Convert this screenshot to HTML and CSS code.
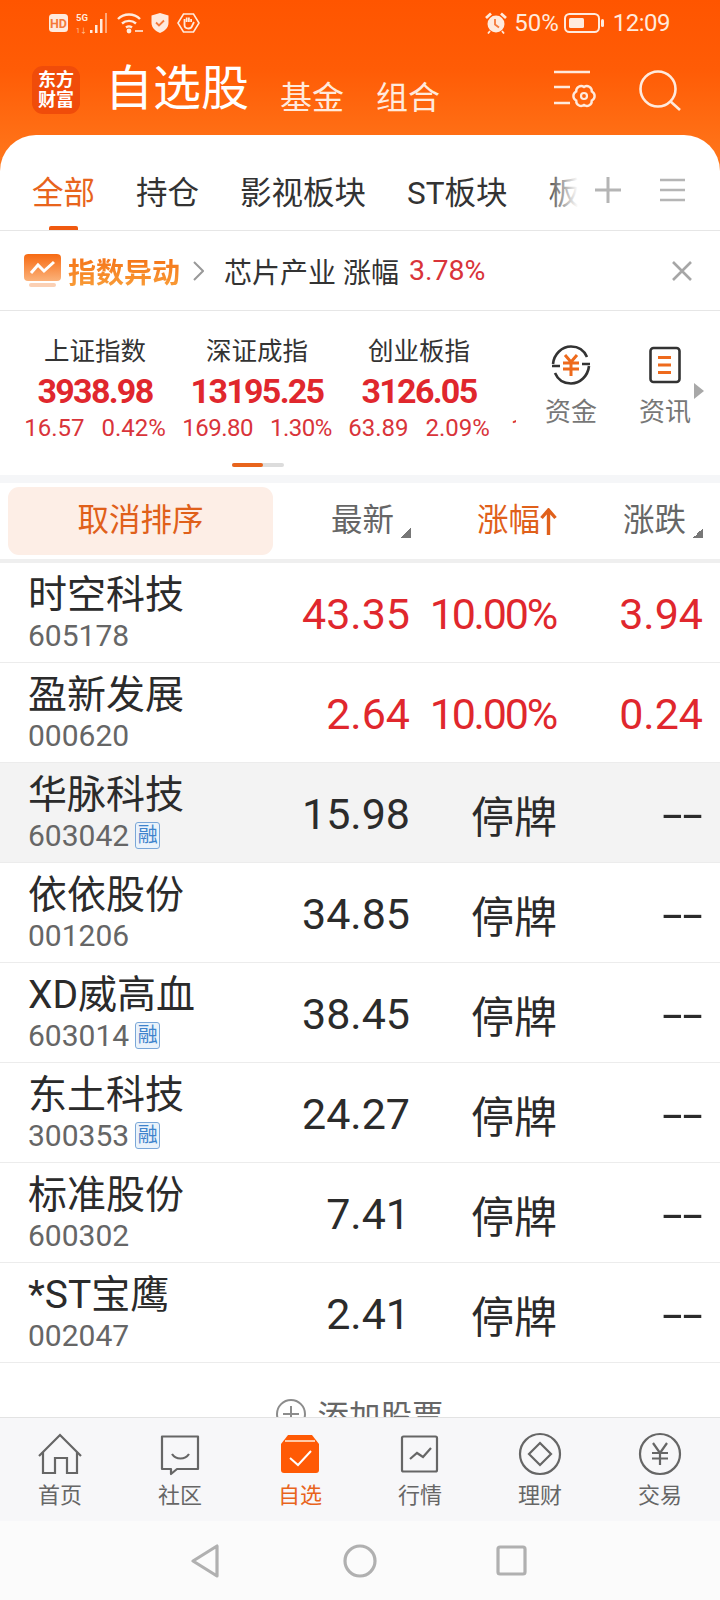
FILE: index.html
```html
<!DOCTYPE html>
<html lang="zh-CN">
<head>
    <meta charset="UTF-8">
    <meta name="viewport" content="width=device-width, initial-scale=1.0">
    <title>自选股</title>
    <link rel="stylesheet" href="styles.css">
</head>
<body>
<div class="screen">
    <div class="statusbar">
        <div class="status-left">
            <svg width="19" height="18" viewBox="0 0 19 18"><rect width="19" height="18" rx="3.500" fill="#ffeadd"/><text x="9.500" y="14" text-anchor="middle" class="hd-text">HD</text></svg>
            <svg width="33" height="22" viewBox="0 0 33 22"><text x="0" y="9" class="sig-text">5G</text><text x="0" y="21" class="sig-small">1↓</text><g fill="#ffeadd"><rect x="14" y="18" width="2.500" height="3"/><rect x="19" y="13" width="2.500" height="8"/><rect x="24" y="7" width="2.500" height="14"/><rect x="29" y="1" width="2" height="20" opacity=".55"/></g></svg>
            <svg width="26" height="22" viewBox="0 0 26 22" fill="none" stroke="#ffeadd" stroke-width="2.400"><path d="M1 7C7 1 17 1 23 7"/><path d="M5 11.500C9 8 15 8 19 11.500"/><path d="M9 15.500C11 14 13 14 15 15.500"/><circle cx="12" cy="19" r="1.200" fill="#ffeadd"/><path d="M18 19H26" stroke-width="1.600"/></svg>
            <svg width="18" height="20" viewBox="0 0 18 20"><path d="M9 0L17.500 2.500V10C17.500 15 13 18.500 9 20C5 18.500 .5 15 .5 10V2.500Z" fill="#ffeadd"/><path d="M5 9.500L8 12.500L13 7.500" fill="none" stroke="#f5793a" stroke-width="1.800"/></svg>
            <svg width="23" height="20" viewBox="0 0 23 20" fill="none" stroke="#ffeadd" stroke-width="1.600"><path d="M6.500 1H16.500L22 10L16.500 19H6.500L1 10Z"/><path d="M7.500 9V6M9.700 9V4.500M11.900 9V4.500M14.100 9V6M7.500 8V12C7.500 14.500 9.500 15.500 11.500 15.500C14 15.500 15 14 15.500 12L17 9" stroke-width="1.800"/></svg>
        </div>
        <div class="status-right">
            <svg width="22" height="22" viewBox="0 0 22 22"><circle cx="11" cy="12" r="8.500" fill="#ffeadd"/><path d="M10 7V12.500L14 15.500" fill="none" stroke="#f5793a" stroke-width="1.800"/><path d="M1 6L6 1.500M21 6L16 1.500" stroke="#ffeadd" stroke-width="2.800"/><path d="M5 19L3 21.500M17 19L19 21.500" stroke="#ffeadd" stroke-width="1.800"/></svg>
            <span class="status-pct">50%</span>
            <svg class="battery" width="40" height="20" viewBox="0 0 40 20"><rect x="1" y="1" width="34" height="18" rx="4.500" fill="none" stroke="#ffeadd" stroke-width="2"/><rect x="5" y="5" width="15" height="10" rx="1.500" fill="#ffeadd"/><rect x="37" y="6" width="3" height="8" rx="1.500" fill="#ffeadd"/></svg>
            <span class="status-time">12:09</span>
        </div>
    </div>

    <div class="topbar">
        <div class="logo"><span>东方</span><span>财富</span></div>
        <div class="title">自选股</div>
        <div class="subtab">基金</div>
        <div class="subtab">组合</div>
        <div class="top-icons">
            <svg width="44" height="40" viewBox="0 0 44 40" fill="none" stroke="#ffeadd" stroke-width="2.400"><path d="M0 2H36M0 17H16M0 33H16"/><path d="M37.800 21.500A5 5 0 0 1 37.800 30.500A5 5 0 0 1 30 35A5 5 0 0 1 22.200 30.500A5 5 0 0 1 22.200 21.500A5 5 0 0 1 30 17A5 5 0 0 1 37.800 21.500Z"/><circle cx="30" cy="26" r="3" stroke-width="2.200"/></svg>
            <svg width="42" height="42" viewBox="0 0 42 42" fill="none" stroke="#ffeadd" stroke-width="2.600"><circle cx="19" cy="19" r="17.500"/><path d="M31 31L41 40"/></svg>
        </div>
    </div>

    <div class="card">
        <div class="tabs">
            <div class="tab-scroll">
                <div class="tab active">全部</div>
                <div class="tab">持仓</div>
                <div class="tab">影视板块</div>
                <div class="tab">ST板块</div>
                <div class="tab">板块</div>
                <div class="tab-fade"></div>
            </div>
            <svg class="tab-plus" width="26" height="26" viewBox="0 0 26 26" stroke="#b5b5b5" stroke-width="3"><path d="M0 13H26M13 0V26"/></svg>
            <svg class="tab-menu" width="25" height="24" viewBox="0 0 25 24" stroke="#b5b5b5" stroke-width="2.500"><path d="M0 2H25M0 12H25M0 22H25"/></svg>
        </div>

        <div class="notice">
            <svg width="37" height="33" viewBox="0 0 37 33"><defs><linearGradient id="ng" x1="0" y1="0" x2="0" y2="1"><stop offset="0" stop-color="#f76a12"/><stop offset="1" stop-color="#fbb27a"/></linearGradient></defs><rect width="37" height="27" rx="4" fill="url(#ng)"/><rect x="5" y="29" width="27" height="4" rx="2" fill="#fbd0b4"/><path d="M7 19L14 11L20 17L30 8" fill="none" stroke="#fff" stroke-width="3"/></svg>
            <span class="notice-label">指数异动</span>
            <svg class="notice-arrow" width="11" height="20" viewBox="0 0 11 20" fill="none" stroke="#999" stroke-width="2"><path d="M1 1L10 10L1 19"/></svg>
            <span class="notice-text">芯片产业 涨幅</span>
            <span class="notice-num">3.78%</span>
            <svg class="notice-close" width="20" height="20" viewBox="0 0 20 20" stroke="#a6a6a6" stroke-width="2.600"><path d="M1 1L19 19M19 1L1 19"/></svg>
        </div>

        <div class="indexes">
            <div class="index-row">
                <div class="index-scroll">
                    <div class="index-item">
                        <div class="index-name">上证指数</div>
                        <div class="index-value">3938.98</div>
                        <div class="index-sub"><span>16.57</span><span>0.42%</span></div>
                    </div>
                    <div class="index-item">
                        <div class="index-name">深证成指</div>
                        <div class="index-value">13195.25</div>
                        <div class="index-sub tight"><span>169.80</span><span>1.30%</span></div>
                    </div>
                    <div class="index-item">
                        <div class="index-name">创业板指</div>
                        <div class="index-value">3126.05</div>
                        <div class="index-sub"><span>63.89</span><span>2.09%</span></div>
                    </div>
                    <div class="index-item clipped">
                        <div class="index-sub"><span>1</span></div>
                    </div>
                </div>
                <div class="shortcut first">
                    <svg width="40" height="40" viewBox="0 0 40 40" fill="none" stroke="#333" stroke-width="2.600"><path d="M2 19C3 9 11 1.500 20 1.500C27 1.500 33 5 36 12"/><path d="M38 21C37 31 29 38.500 20 38.500C13 38.500 7 35 4 28"/><path d="M31 19H39M1 21H9"/><path d="M14 10L20 17L26 10M12 18H28M12 24H28M20 17V31" stroke="#ee6a1c" stroke-width="3"/></svg>
                    <span>资金</span>
                </div>
                <div class="shortcut">
                    <svg width="32" height="37" viewBox="0 0 32 37" fill="none"><rect x="1.500" y="1.500" width="29" height="34" rx="3" stroke="#333" stroke-width="2.600"/><path d="M9 11H22M9 18.500H22M9 26H22" stroke="#ee6a1c" stroke-width="3"/></svg>
                    <span>资讯</span>
                </div>
                <svg class="more-arrow" width="10" height="16" viewBox="0 0 10 16"><path d="M0 0L10 8L0 16Z" fill="#a8a8a8"/></svg>
            </div>
            <div class="scrollbar"><div class="scrollbar-fill"></div></div>
        </div>

        <div class="band"></div>

        <div class="list-head">
            <div class="sort-btn">取消排序</div>
            <div class="head-cell">最新<i class="corner"></i></div>
            <div class="head-cell on">涨幅<svg width="17" height="27" viewBox="0 0 17 27" fill="none" stroke="#e0601a" stroke-width="3.400"><path d="M8.500 27V2M1.500 10L8.500 2L15.500 10"/></svg></div>
            <div class="head-cell">涨跌<i class="corner"></i></div>
        </div>

        <div class="band thin"></div>

        <div class="list">
            <div class="row">
                <div class="stock"><div class="name">时空科技</div><div class="code">605178</div></div>
                <div class="num up">43.35</div><div class="num pct up">10.00%</div><div class="num up">3.94</div>
            </div>
            <div class="row">
                <div class="stock"><div class="name">盈新发展</div><div class="code">000620</div></div>
                <div class="num up">2.64</div><div class="num pct up">10.00%</div><div class="num up">0.24</div>
            </div>
            <div class="row pressed">
                <div class="stock"><div class="name">华脉科技</div><div class="code">603042<span class="badge">融</span></div></div>
                <div class="num">15.98</div><div class="num halt">停牌</div><div class="num"><span class="dash">--</span></div>
            </div>
            <div class="row">
                <div class="stock"><div class="name">依依股份</div><div class="code">001206</div></div>
                <div class="num">34.85</div><div class="num halt">停牌</div><div class="num"><span class="dash">--</span></div>
            </div>
            <div class="row">
                <div class="stock"><div class="name">XD威高血</div><div class="code">603014<span class="badge">融</span></div></div>
                <div class="num">38.45</div><div class="num halt">停牌</div><div class="num"><span class="dash">--</span></div>
            </div>
            <div class="row">
                <div class="stock"><div class="name">东土科技</div><div class="code">300353<span class="badge">融</span></div></div>
                <div class="num">24.27</div><div class="num halt">停牌</div><div class="num"><span class="dash">--</span></div>
            </div>
            <div class="row">
                <div class="stock"><div class="name">标准股份</div><div class="code">600302</div></div>
                <div class="num">7.41</div><div class="num halt">停牌</div><div class="num"><span class="dash">--</span></div>
            </div>
            <div class="row">
                <div class="stock"><div class="name">*ST宝鹰</div><div class="code">002047</div></div>
                <div class="num">2.41</div><div class="num halt">停牌</div><div class="num"><span class="dash">--</span></div>
            </div>
            <div class="add-stock">
                <svg width="30" height="30" viewBox="0 0 30 30" fill="none" stroke="#8c8c8c" stroke-width="2"><circle cx="15" cy="15" r="14"/><path d="M7 15H23M15 7V23"/></svg>
                <span>添加股票</span>
            </div>
        </div>

        <div class="tabbar">
            <div class="nav-item">
                <svg width="44" height="44" viewBox="0 0 44 44" fill="none" stroke="#666" stroke-width="2.200"><path d="M1 24L22 3L43 24"/><path d="M5 20V41H17V26H29V41H39V20"/></svg>
                <span>首页</span>
            </div>
            <div class="nav-item">
                <svg width="44" height="44" viewBox="0 0 44 44" fill="none" stroke="#666" stroke-width="2.200"><path d="M4 4.500H40V37H19L13 42V37H4Z" stroke-linejoin="round"/><path d="M14 22C18 28 27 28 31 22"/></svg>
                <span>社区</span>
            </div>
            <div class="nav-item active">
                <svg width="44" height="44" viewBox="0 0 44 44" fill="none"><path d="M10 3H34L41 12V38C41 40 40 41 38 41H6C4 41 3 40 3 38V12Z" fill="#ff5a05"/><path d="M7 9H37" stroke="#ffc9a6" stroke-width="2"/><path d="M12 26L20 33L33 19" stroke="#fff" stroke-width="2"/></svg>
                <span>自选</span>
            </div>
            <div class="nav-item">
                <svg width="44" height="44" viewBox="0 0 44 44" fill="none" stroke="#666" stroke-width="2.200"><rect x="4" y="4.500" width="35" height="35" rx="1.500"/><path d="M12 27L19 21L25 25L33 16"/></svg>
                <span>行情</span>
            </div>
            <div class="nav-item">
                <svg width="44" height="44" viewBox="0 0 44 44" fill="none" stroke="#666" stroke-width="2.200"><circle cx="22" cy="22" r="20"/><path d="M22 11L33 22L22 33L11 22Z"/></svg>
                <span>理财</span>
            </div>
            <div class="nav-item">
                <svg width="44" height="44" viewBox="0 0 44 44" fill="none" stroke="#666" stroke-width="2.200"><circle cx="22" cy="22" r="20"/><path d="M15 11L22 21L29 11M14 21H30M14 26.500H30M22 21V33"/></svg>
                <span>交易</span>
            </div>
        </div>

        <div class="sysnav">
            <svg width="30" height="34" viewBox="0 0 30 34" fill="none" stroke="#b0b0b0" stroke-width="3.200" stroke-linejoin="round"><path d="M27 2V32L3 17Z"/></svg>
            <svg width="34" height="34" viewBox="0 0 34 34" fill="none" stroke="#b0b0b0" stroke-width="3.200"><circle cx="17" cy="17" r="15"/></svg>
            <svg class="sys-square" width="31" height="31" viewBox="0 0 31 31" fill="none" stroke="#b0b0b0" stroke-width="3.200"><rect x="2" y="2" width="27" height="27" rx="2"/></svg>
        </div>
    </div>
</div>
</body>
</html>
```

FILE: styles.css
```css
* {
    box-sizing: border-box;
}

body {
    margin: 0;
    font-family: Roboto, "Noto Sans CJK SC", sans-serif;
    color: #222;
}

.screen {
    width: 720px;
    height: 1600px;
    display: flex;
    flex-direction: column;
    overflow: hidden;
    background: linear-gradient(180deg, #ff5500 0%, #ff5c06 40%, #ff7a1e 100%) no-repeat;
    background-size: 100% 175px;
}

/* status bar */
.statusbar {
    height: 46px;
    padding: 0 50px 0 49px;
    display: flex;
    justify-content: space-between;
    align-items: center;
    color: #ffeadd;
}

.status-left, .status-right {
    display: flex;
    align-items: center;
}

.status-left {
    gap: 8px;
}

.hd-text {
    font-size: 12.500px;
    font-weight: 700;
    fill: #f5793a;
}

.sig-text {
    font-size: 9.500px;
    font-weight: 700;
    fill: #ffeadd;
}

.sig-small {
    font-size: 7px;
    fill: #ffc9a6;
}

.status-pct {
    margin-left: 7px;
    font-size: 24px;
}

.battery {
    margin-left: 5px;
}

.status-time {
    margin-left: 9px;
    font-size: 24px;
    letter-spacing: -.5px;
}

/* top bar */
.topbar {
    height: 89px;
    padding: 20px 39px 0 32px;
    display: flex;
    align-items: flex-start;
}

.logo {
    width: 48px;
    height: 48px;
    border-radius: 11px;
    background: #f04c0a;
    color: #fff;
    font-size: 18px;
    font-weight: 700;
    line-height: 20px;
    display: flex;
    flex-direction: column;
    align-items: center;
    justify-content: center;
}

.title {
    margin-left: 25px;
    margin-top: -8px;
    font-size: 48px;
    line-height: 62px;
    color: #fff;
}

.subtab {
    margin-left: 31px;
    margin-top: 9px;
    font-size: 32px;
    line-height: 46px;
    color: #ffeadd;
}

.subtab + .subtab {
    margin-left: 32px;
}

.top-icons {
    margin-left: auto;
    display: flex;
    align-items: flex-start;
    gap: 41px;
    margin-top: 4px;
}

/* white card */
.card {
    flex: 1;
    min-height: 0;
    display: flex;
    flex-direction: column;
    background: #fff;
    border-radius: 36px 36px 0 0;
}

.tabs {
    height: 96px;
    flex-shrink: 0;
    display: flex;
    align-items: center;
    border-bottom: 1px solid #e6e6e6;
}

.tab-scroll {
    position: relative;
    width: 578px;
    height: 95px;
    padding-left: 32px;
    display: flex;
    gap: 41px;
    overflow: hidden;
    flex-shrink: 0;
}

.tab {
    font-size: 31.500px;
    line-height: 117px;
    white-space: nowrap;
    color: #333;
}

.tab.active {
    color: #e8641c;
    position: relative;
}

.tab.active::after {
    content: "";
    position: absolute;
    left: 17px;
    right: 17px;
    bottom: 0;
    height: 4px;
    border-radius: 2px 2px 0 0;
    background: #f0590f;
}

.tab-fade {
    position: absolute;
    top: 0;
    bottom: 0;
    right: 0;
    width: 34px;
    background: linear-gradient(90deg, rgba(255, 255, 255, 0), #fff);
}

.tab-plus {
    margin-left: 17px;
    margin-top: 15px;
}

.tab-menu {
    margin-left: 39px;
    margin-top: 14px;
}

/* notice */
.notice {
    height: 80px;
    flex-shrink: 0;
    padding-left: 24px;
    display: flex;
    align-items: center;
    border-bottom: 1px solid #e6e6e6;
}

.notice-label {
    margin-left: 7px;
    font-size: 28px;
    font-weight: 700;
    background: linear-gradient(180deg, #f46a10, #f9a23c);
    -webkit-background-clip: text;
    background-clip: text;
    color: transparent;
}

.notice-arrow {
    margin-left: 13px;
}

.notice-text {
    margin-left: 20px;
    font-size: 28px;
    color: #333;
}

.notice-num {
    margin-left: 10px;
    font-size: 28.500px;
    color: #d9343a;
}

.notice-close {
    margin-left: auto;
    margin-right: 28px;
}

/* index strip */
.indexes {
    height: 164px;
    flex-shrink: 0;
}

.index-row {
    height: 152px;
    display: flex;
}

.index-scroll {
    width: 516px;
    padding-left: 14px;
    padding-top: 22px;
    display: flex;
    overflow: hidden;
    flex-shrink: 0;
}

.index-item {
    width: 162px;
    flex-shrink: 0;
    display: flex;
    flex-direction: column;
    align-items: center;
}

.index-item.clipped {
    padding-top: 80px;
    padding-left: 11px;
    align-items: flex-start;
}

.index-name {
    font-size: 25.500px;
    line-height: 36px;
    color: #333;
}

.index-value {
    font-size: 34px;
    font-weight: 700;
    line-height: 44px;
    letter-spacing: -1.700px;
    color: #e0272d;
}

.index-sub {
    display: flex;
    gap: 17px;
    font-size: 24px;
    line-height: 30px;
    color: #d9343a;
    white-space: nowrap;
}

.index-sub.tight {
    letter-spacing: -.5px;
}

.shortcut {
    width: 78px;
    padding-top: 34px;
    display: flex;
    flex-direction: column;
    align-items: center;
    gap: 9px;
    font-size: 26px;
    line-height: 36px;
    color: #777;
}

.shortcut svg {
    height: 40px;
}

.shortcut.first {
    width: 110px;
}

.more-arrow {
    margin-top: 72px;
    margin-left: -10px;
}

.scrollbar {
    width: 52px;
    height: 4px;
    margin-left: 232px;
    border-radius: 2px;
    background: #dcdcdc;
}

.scrollbar-fill {
    width: 31px;
    height: 4px;
    border-radius: 2px;
    background: #e8641c;
}

.band {
    height: 8px;
    flex-shrink: 0;
    background: #f5f6f8;
}

.band.thin {
    height: 4px;
    background: #efefef;
}

/* list */
.list-head {
    height: 76px;
    flex-shrink: 0;
    padding: 4px 17px 4px 8px;
    display: grid;
    grid-template-columns: 265px 138px 146px 146px;
    align-items: center;
}

.sort-btn {
    height: 68px;
    border-radius: 11px;
    background: #fdeee6;
    color: #e0601a;
    font-size: 31.500px;
    line-height: 68px;
    text-align: center;
}

.head-cell {
    position: relative;
    display: flex;
    justify-content: flex-end;
    align-items: center;
    font-size: 31.500px;
    line-height: 68px;
    color: #666;
}

.head-cell.on {
    color: #e0601a;
}

.corner {
    width: 10px;
    height: 10px;
    margin-left: 7px;
    margin-top: 24px;
    background: linear-gradient(135deg, transparent 50%, #777 50%);
}

.list {
    flex: 1;
    min-height: 0;
    overflow: hidden;
}

.row {
    height: 100px;
    padding: 0 17px 0 28px;
    display: grid;
    grid-template-columns: 222px 160px 148px 145px;
    align-items: center;
    border-bottom: 1px solid #ececec;
}

.row.pressed {
    background: #f3f3f3;
}

.name {
    font-size: 39px;
    line-height: 46px;
    color: #2b2b2b;
    white-space: nowrap;
}

.code {
    display: flex;
    align-items: center;
    font-size: 30px;
    line-height: 36px;
    color: #666;
}

.badge {
    width: 25px;
    height: 27px;
    margin-left: 6px;
    border: 1px solid #7aa7d8;
    border-radius: 3px;
    background: #eaf3fb;
    color: #3f83cc;
    font-size: 20px;
    line-height: 25px;
    text-align: center;
}

.num {
    padding-top: 3px;
    font-size: 43px;
    text-align: right;
    color: #2b2b2b;
    white-space: nowrap;
}

.num.pct {
    padding-right: 2px;
    letter-spacing: -2.200px;
}

.num.halt {
    padding-right: 1px;
    font-size: 43px;
}

.dash {
    display: inline-block;
    transform: scaleX(1.7);
    transform-origin: right center;
}

.up {
    color: #e0272d;
}

.add-stock {
    margin-top: 28px;
    display: flex;
    justify-content: center;
    align-items: center;
    gap: 11px;
    font-size: 31.500px;
    color: #666;
}

/* bottom nav */
.tabbar {
    height: 104px;
    flex-shrink: 0;
    display: grid;
    grid-template-columns: repeat(6, 120px);
    padding-top: 14px;
    border-top: 1px solid #e3e3e3;
    background: #f7f7f9;
}

.nav-item {
    display: flex;
    flex-direction: column;
    align-items: center;
    gap: 5px;
    font-size: 22px;
    line-height: 30px;
    color: #666;
}

.nav-item.active {
    color: #e8641c;
}

.sysnav {
    height: 79px;
    flex-shrink: 0;
    padding-left: 190px;
    display: flex;
    align-items: center;
    gap: 123px;
    background: #fbfbfb;
}

.sys-square {
    margin-left: -4px;
}
```
